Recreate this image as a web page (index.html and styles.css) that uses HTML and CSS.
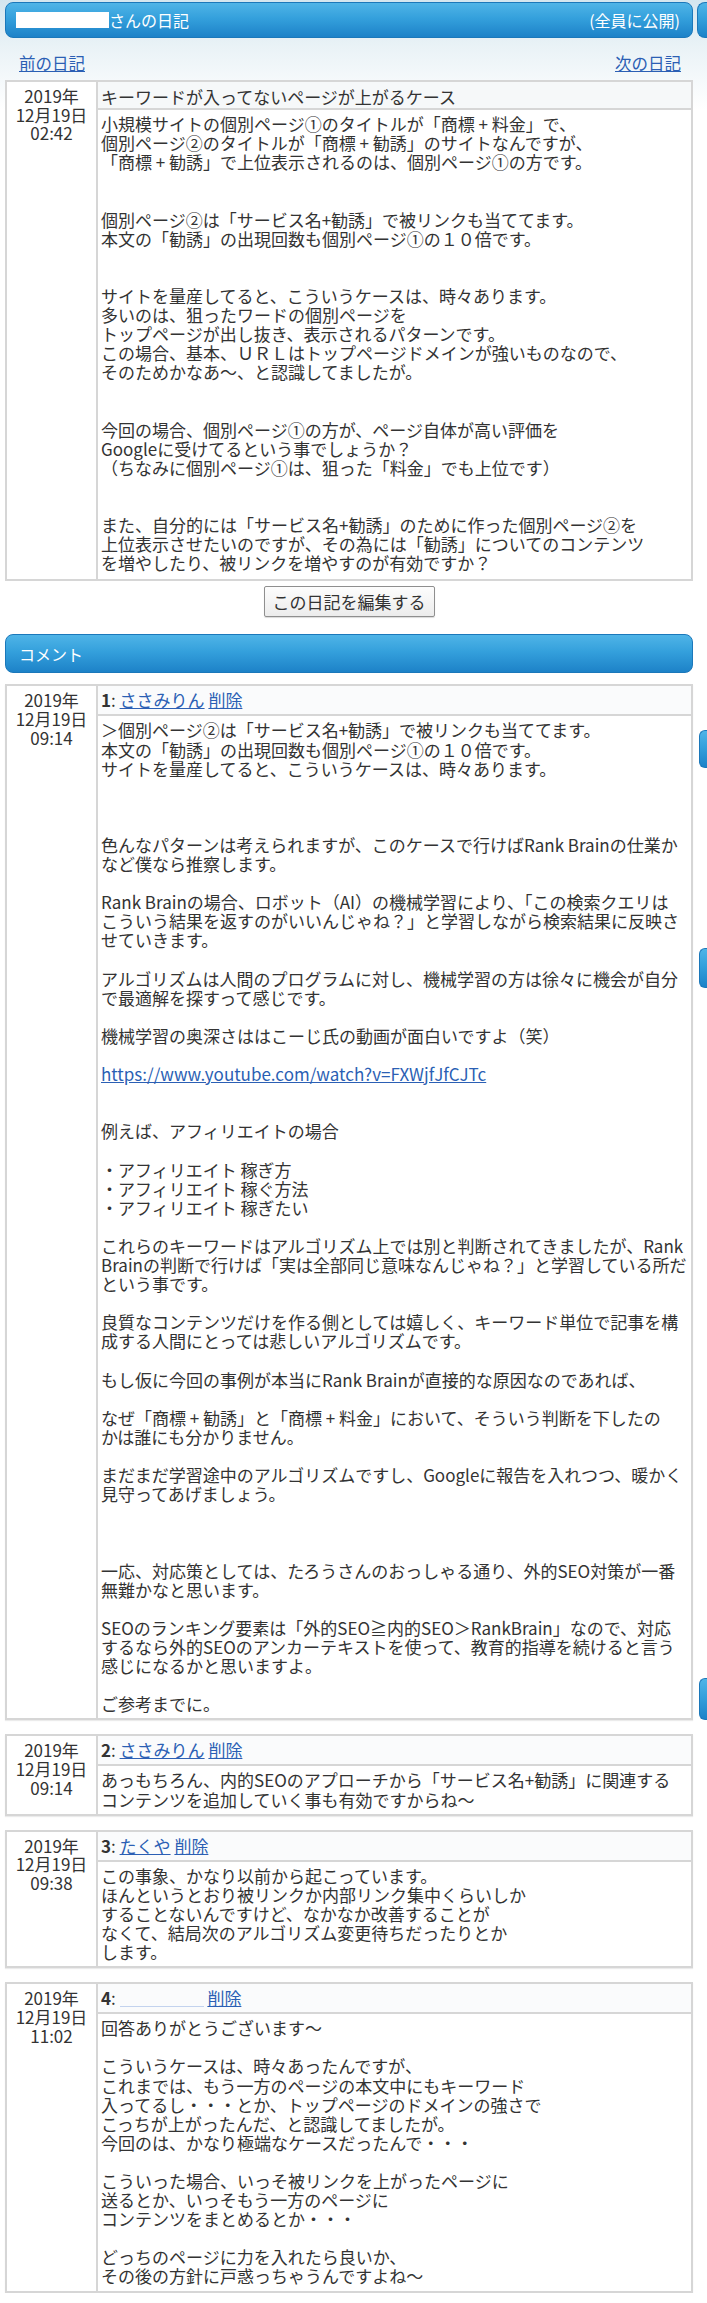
FILE: index.html
```html
<!doctype html>
<html lang="ja">
<head>
	<meta charset="UTF-8">
	<title>日記</title>
	<link rel="stylesheet" href="styles.css">
</head>
<body>
	<div class="page">
		<div class="main">
			<div class="bar">
				<h1 class="bar-title"><span class="mask"></span>さんの日記</h1>
				<span class="bar-note">(全員に公開)</span>
			</div>
			<div class="nav">
				<a href="javascript:void(0);">前の日記</a>
				<a href="javascript:void(0);">次の日記</a>
			</div>

			<div class="entry diary">
				<div class="date">2019年
12月19日
02:42</div>
				<div class="head">キーワードが入ってないページが上がるケース</div>
				<div class="text">小規模サイトの個別ページ①のタイトルが「商標 + 料金」で、
個別ページ②のタイトルが「商標 + 勧誘」のサイトなんですが、
「商標 + 勧誘」で上位表示されるのは、個別ページ①の方です。


個別ページ②は「サービス名+勧誘」で被リンクも当ててます。
本文の「勧誘」の出現回数も個別ページ①の１０倍です。


サイトを量産してると、こういうケースは、時々あります。
多いのは、狙ったワードの個別ページを
トップページが出し抜き、表示されるパターンです。
この場合、基本、ＵＲＬはトップページドメインが強いものなので、
そのためかなあ～、と認識してましたが。


今回の場合、個別ページ①の方が、ページ自体が高い評価を
Googleに受けてるという事でしょうか？
（ちなみに個別ページ①は、狙った「料金」でも上位です）


また、自分的には「サービス名+勧誘」のために作った個別ページ②を
上位表示させたいのですが、その為には「勧誘」についてのコンテンツ
を増やしたり、被リンクを増やすのが有効ですか？</div>
			</div>
			<div class="edit"><button class="edit-btn">この日記を編集する</button></div>

			<div class="bar bar-comment">
				<h2 class="bar-title">コメント</h2>
			</div>

			<div class="entry comment first">
				<div class="date">2019年
12月19日
09:14</div>
				<div class="head"><b>1</b>: <a href="javascript:void(0);">ささみりん</a> <a href="javascript:void(0);">削除</a></div>
				<div class="text">＞個別ページ②は「サービス名+勧誘」で被リンクも当ててます。
本文の「勧誘」の出現回数も個別ページ①の１０倍です。
サイトを量産してると、こういうケースは、時々あります。



色んなパターンは考えられますが、このケースで行けばRank Brainの仕業か
など僕なら推察します。

Rank Brainの場合、ロボット（AI）の機械学習により、「この検索クエリは
こういう結果を返すのがいいんじゃね？」と学習しながら検索結果に反映さ
せていきます。

アルゴリズムは人間のプログラムに対し、機械学習の方は徐々に機会が自分
で最適解を探すって感じです。

機械学習の奥深さははこーじ氏の動画が面白いですよ（笑）

<a href="javascript:void(0);">https://www.youtube.com/watch?v=FXWjfJfCJTc</a>


例えば、アフィリエイトの場合

・アフィリエイト 稼ぎ方
・アフィリエイト 稼ぐ方法
・アフィリエイト 稼ぎたい

これらのキーワードはアルゴリズム上では別と判断されてきましたが、Rank
Brainの判断で行けば「実は全部同じ意味なんじゃね？」と学習している所だ
という事です。

良質なコンテンツだけを作る側としては嬉しく、キーワード単位で記事を構
成する人間にとっては悲しいアルゴリズムです。

もし仮に今回の事例が本当にRank Brainが直接的な原因なのであれば、

なぜ「商標 + 勧誘」と「商標 + 料金」において、そういう判断を下したの
かは誰にも分かりません。

まだまだ学習途中のアルゴリズムですし、Googleに報告を入れつつ、暖かく
見守ってあげましょう。



一応、対応策としては、たろうさんのおっしゃる通り、外的SEO対策が一番
無難かなと思います。

SEOのランキング要素は「外的SEO≧内的SEO＞RankBrain」なので、対応
するなら外的SEOのアンカーテキストを使って、教育的指導を続けると言う
感じになるかと思いますよ。

ご参考までに。</div>
			</div>

			<div class="entry comment">
				<div class="date">2019年
12月19日
09:14</div>
				<div class="head"><b>2</b>: <a href="javascript:void(0);">ささみりん</a> <a href="javascript:void(0);">削除</a></div>
				<div class="text">あっもちろん、内的SEOのアプローチから「サービス名+勧誘」に関連する
コンテンツを追加していく事も有効ですからね～</div>
			</div>

			<div class="entry comment">
				<div class="date">2019年
12月19日
09:38</div>
				<div class="head"><b>3</b>: <a href="javascript:void(0);">たくや</a> <a href="javascript:void(0);">削除</a></div>
				<div class="text">この事象、かなり以前から起こっています。
ほんというとおり被リンクか内部リンク集中くらいしか
することないんですけど、なかなか改善することが
なくて、結局次のアルゴリズム変更待ちだったりとか
します。</div>
			</div>

			<div class="entry comment">
				<div class="date">2019年
12月19日
11:02</div>
				<div class="head"><b>4</b>: <a class="hidden-name" href="javascript:void(0);"></a> <a href="javascript:void(0);">削除</a></div>
				<div class="text">回答ありがとうございます～

こういうケースは、時々あったんですが、
これまでは、もう一方のページの本文中にもキーワード
入ってるし・・・とか、トップページのドメインの強さで
こっちが上がったんだ、と認識してましたが。
今回のは、かなり極端なケースだったんで・・・

こういった場合、いっそ被リンクを上がったページに
送るとか、いっそもう一方のページに
コンテンツをまとめるとか・・・

どっちのページに力を入れたら良いか、
その後の方針に戸惑っちゃうんですよね～</div>
			</div>
		</div>

		<div class="side">
			<div class="side-bar"></div>
			<div class="side-tab tab-1"></div>
			<div class="side-tab tab-2"></div>
			<div class="side-tab tab-3"></div>
		</div>
	</div>
</body>
</html>
```

FILE: styles.css
```css
html, body {
	margin: 0;
	padding: 0;
}
body {
	width: 707px;
	overflow-x: hidden;
	background: #fff linear-gradient(#d4e6ef 0, #e9f2f6 45px, #fff 110px) no-repeat;
	font-family: "Noto Sans CJK JP", "Liberation Sans", sans-serif;
	font-size: 17px;
	color: #333;
}
a {
	color: #2b5fb4;
	text-decoration: underline;
}
.page {
	display: flex;
	width: 707px;
	overflow: hidden;
}
.main {
	flex: none;
	width: 688px;
	margin-left: 5px;
}

/* blue title bars */
.bar {
	display: flex;
	justify-content: space-between;
	align-items: center;
	box-sizing: border-box;
	height: 36px;
	margin-top: 2px;
	padding: 0 12px 0 10px;
	border: 1px solid #1b78ba;
	border-radius: 8px;
	background: linear-gradient(#4fb4e7, #34a0dc 45%, #1d82c8);
	color: #fff;
}
.bar-title {
	margin: 0;
	font-size: 16px;
	font-weight: normal;
	line-height: 20px;
	display: flex;
	align-items: center;
}
.bar-note {
	font-size: 16px;
	line-height: 20px;
}
.mask {
	display: inline-block;
	width: 93px;
	height: 16px;
	background-color: #fff;
}
.bar-comment {
	height: 39px;
	margin-top: 17px;
	padding-left: 13px;
}

.nav {
	display: flex;
	justify-content: space-between;
	padding: 15px 12px 7px 14px;
	font-size: 16.5px;
	line-height: 20px;
}

/* diary / comment boxes */
.entry {
	display: grid;
	grid-template-columns: 91px 1fr;
	border: 2px solid #d6d6d6;
	background-color: #fff;
}
.date {
	grid-row: 1 / 3;
	padding-top: 5px;
	border-right: 2px solid #d6d6d6;
	text-align: center;
	line-height: 18.7px;
	white-space: pre-line;
}
.head {
	padding: 4px 3px 5px;
	line-height: 19.1px;
	border-bottom: 2px solid #d6d6d6;
	background-color: #fafbfc;
}
.head b {
	font-weight: bold;
}
.text {
	padding: 4px 3px 5px;
	line-height: 19.1px;
	white-space: pre;
}
.diary .head {
	padding: 5px 3px 2px;
	background-color: #f6f8f9;
}
.diary .text {
	padding-bottom: 7px;
}
.comment {
	margin-top: 14px;
	box-shadow: 0 1px 1px rgba(0,0,0,.08);
}
.comment.first {
	margin-top: 11px;
}
.hidden-name {
	display: inline-block;
	width: 84px;
	height: 15px;
	vertical-align: -2px;
	border-bottom: 1px solid #c3d3ee;
}

.edit {
	display: flex;
	justify-content: center;
	margin-top: 5px;
}
.edit-btn {
	height: 31px;
	padding: 0 8px;
	border: 1px solid #8f8f8f;
	border-radius: 2px;
	background: linear-gradient(#fdfdfd, #ececec);
	font-family: "Noto Sans CJK JP", sans-serif;
	font-size: 17px;
	color: #333;
	box-shadow: 0 1px 1px rgba(0,0,0,.15);
}

/* cut off right column */
.side {
	flex: none;
	width: 40px;
	margin-left: 4px;
}
.side-bar,
.side-tab {
	background: linear-gradient(#4fb4e7, #34a0dc 45%, #1d82c8);
	border: 1px solid #1b78ba;
	border-right: 0;
}
.side-bar {
	height: 34px;
	margin-top: 2px;
	border-radius: 8px 0 0 8px;
}
.side-tab {
	margin-left: 2px;
	border-radius: 6px 0 0 6px;
}
.tab-1 {
	margin-top: 692px;
	height: 36px;
}
.tab-2 {
	margin-top: 180px;
	height: 38px;
}
.tab-3 {
	margin-top: 690px;
	height: 40px;
}
```
